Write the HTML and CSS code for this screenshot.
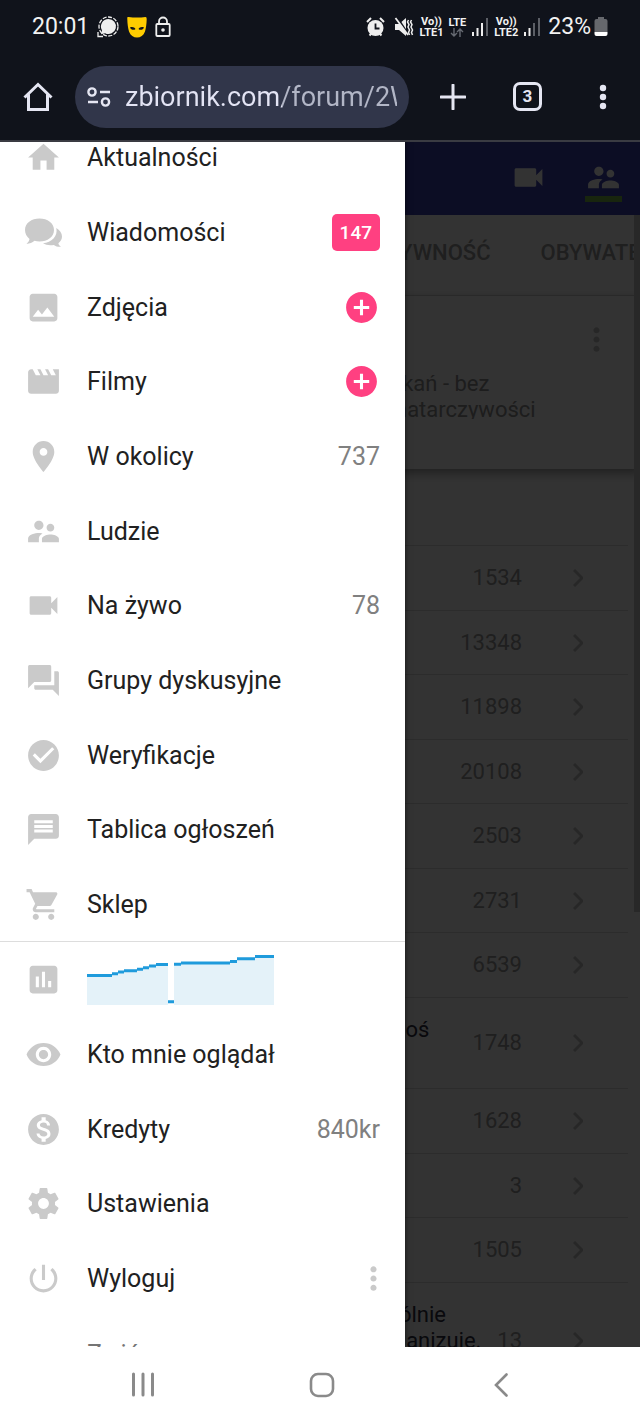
FILE: index.html
```html
<!DOCTYPE html>
<html lang="pl">
<head>
  <meta charset="UTF-8">
  <meta name="viewport" content="width=device-width, initial-scale=1.0">
  <title>zbiornik.com</title>
  <link rel="stylesheet" href="styles.css">
</head>
<body>
  <div class="status-bar">
    <div class="status-left">
      <span class="clock">20:01</span>
      <svg width="22" height="22" viewBox="0 0 22 22"><circle cx="11.500" cy="10.500" r="9.500" fill="none" stroke="#eee" stroke-width="1.300" stroke-dasharray="4 1.500"/><path d="M1 16v4.500h5" fill="none" stroke="#eee" stroke-width="1.300"/><path d="M11.500 3a7.500 7.500 0 1 1-3.400 14.200L4 18.300l1-4A7.500 7.500 0 0 1 11.500 3z" fill="#eee"/></svg>
      <svg width="20" height="22" viewBox="0 0 20 22"><path d="M1.500 1Q10 2 18.500 1q1.300 0 1.200 2c-.1 5-.7 9-1.700 12.500C16.500 19.500 13.500 21.500 10 21.500s-6.500-2-8-6C1 12 .4 8 .3 3 .2 1 .4 1 1.500 1z" fill="#fc0"/><path d="M3 11.500c2-1 4.800-.3 5.500 1.500-1.500 1.500-4.700 1-5.500-1.500zM17 11.500c-2-1-4.800-.3-5.500 1.500 1.500 1.500 4.700 1 5.500-1.500z" fill="#10131b"/></svg>
      <svg width="16" height="22" viewBox="0 0 16 22"><rect x="1.300" y="8" width="13.400" height="12" rx="1" fill="none" stroke="#eee" stroke-width="1.800"/><path d="M4 8V5.500a4 4 0 0 1 8 0V8" fill="none" stroke="#eee" stroke-width="1.800"/><circle cx="8" cy="14" r="1.800" fill="#eee"/></svg>
    </div>
    <div class="status-right">
      <svg class="alarm" width="19" height="20" viewBox="0 0 19 20"><circle cx="9.500" cy="11" r="8" fill="#eee"/><path d="M1 5l4-4M18 5l-4-4M3.500 18.500l2-2M15.500 18.500l-2-2" stroke="#eee" stroke-width="2"/><path d="M9.500 6.500v5h4" fill="none" stroke="#10131b" stroke-width="1.800"/></svg>
      <svg width="20" height="20" viewBox="0 0 20 20"><path d="M1 7h4l7-6v18l-7-6H1z" fill="#eee"/><path d="M3 0l11 17" stroke="#10131b" stroke-width="2"/><path d="M1.500 1L14 18" stroke="#eee" stroke-width="1.800"/><path d="M14.500 3l-1 2 1.500 2.500-1 2.500 1.500 3-1 2.500 1 2.500M17.500 3l-1 2 1.500 2.500-1 2.500 1.500 3-1 2.500 1 2.500" fill="none" stroke="#eee" stroke-width="1.500"/></svg>
      <span class="network">Vo))<br>LTE1</span>
      <span class="network">LTE
        <svg width="14" height="9" viewBox="0 0 14 9"><path d="M4 0v8M1 5l3 3 3-3M10 9V1M7 4l3-3 3 3" fill="none" stroke="#666a72" stroke-width="1.400"/></svg>
      </span>
      <svg width="18" height="18" viewBox="0 0 18 18"><path d="M2 14v4M6.500 10v8M11 5v13" stroke="#eee" stroke-width="2"/><path d="M16 0v18" stroke="#5c5f66" stroke-width="2"/></svg>
      <span class="network">Vo))<br>LTE2</span>
      <svg width="18" height="18" viewBox="0 0 18 18"><path d="M2 14v4M6.500 10v8" stroke="#eee" stroke-width="2"/><path d="M11 5v13M16 0v18" stroke="#5c5f66" stroke-width="2"/></svg>
      <span class="battery-text">23%</span>
      <svg width="14" height="20" viewBox="0 0 14 20"><path d="M4 0h6v2h1.500Q13.500 2 13.500 4v11H.5V4Q.5 2 2.500 2H4z" fill="#66686d"/><path d="M.5 15h13v2q0 2-2 2h-9q-2 0-2-2z" fill="#fff"/></svg>
    </div>
  </div>

  <div class="browser-bar">
    <button class="bar-btn" aria-label="Strona główna"><svg width="30" height="30" viewBox="0 0 30 30"><path d="M1.500 15.500L15 2.500l13.500 13M5.500 12.500v15h19v-15" fill="none" stroke="#e5e6f2" stroke-width="3"/></svg></button>
    <div class="address">
      <svg width="24" height="20" viewBox="0 0 24 20"><path d="M13 5h10M1 15h10" stroke="#e5e6f2" stroke-width="2.400"/><circle cx="5" cy="5" r="3.600" fill="none" stroke="#e5e6f2" stroke-width="2.400"/><circle cx="18.500" cy="15" r="3.600" fill="none" stroke="#e5e6f2" stroke-width="2.400"/></svg>
      <input type="text" value="zbiornik.com/forum/2W" aria-label="Adres strony">
    </div>
    <button class="bar-btn" aria-label="Nowa karta"><svg width="26" height="26" viewBox="0 0 26 26"><path d="M13 1v24M1 13h24" stroke="#e5e6f2" stroke-width="3" stroke-linecap="round"/></svg></button>
    <button class="bar-btn" aria-label="Karty"><span class="tabs-count">3</span></button>
    <button class="bar-btn" aria-label="Menu"><svg width="8" height="28" viewBox="0 0 8 28"><g fill="#e5e6f2"><circle cx="4" cy="5" r="3.200"/><circle cx="4" cy="14" r="3.200"/><circle cx="4" cy="23" r="3.200"/></g></svg></button>
  </div>

  <div class="viewport">
    <div class="page">
      <div class="app-header">
        <a href="#" class="header-link" aria-label="Na żywo"><svg class="icon" viewBox="0 0 24 24"><path d="M17 10.500V7c0-.55-.45-1-1-1H4c-.55 0-1 .45-1 1v10c0 .55.45 1 1 1h12c.55 0 1-.45 1-1v-3.500l4 4v-11l-4 4z"/></svg></a>
        <a href="#" class="header-link active" aria-label="Ludzie"><svg class="icon" viewBox="0 0 24 24"><path d="M16.500 12c1.380 0 2.490-1.120 2.490-2.500S17.880 7 16.500 7C15.120 7 14 8.120 14 9.500s1.120 2.500 2.500 2.500zM9 11c1.660 0 2.990-1.340 2.990-3S10.660 5 9 5C7.340 5 6 6.340 6 8s1.340 3 3 3zm7.500 3c-1.830 0-5.500.92-5.500 2.750V19h11v-2.250c0-1.830-3.670-2.750-5.500-2.750zM9 13c-2.330 0-7 1.170-7 3.500V19h7v-2.250c0-.85.33-2.340 2.370-3.470C10.500 13.100 9.660 13 9 13z"/></svg></a>
      </div>
      <div class="tabs">
        <a href="#">AKTYWNOŚĆ</a>
        <a href="#">OBYWATELE</a>
      </div>
      <div class="card">
        <button class="more" aria-label="Więcej"><svg class="icon" viewBox="0 0 24 24"><path d="M12 8c1.100 0 2-.9 2-2s-.9-2-2-2-2 .9-2 2 .9 2 2 2zm0 2c-1.100 0-2 .9-2 2s.9 2 2 2 2-.9 2-2-.9-2-2-2zm0 6c-1.100 0-2 .9-2 2s.9 2 2 2 2-.9 2-2-.9-2-2-2z"/></svg></button>
        <p>tkań - bez<br>natarczywości</p>
      </div>
      <table class="forum">
        <tbody>
          <tr><td class="name"></td><td class="count">1534</td><td class="go"><svg width="10" height="18" viewBox="0 0 10 18"><path d="M1 1l8 8-8 8"/></svg></td></tr>
          <tr><td class="name"></td><td class="count">13348</td><td class="go"><svg width="10" height="18" viewBox="0 0 10 18"><path d="M1 1l8 8-8 8"/></svg></td></tr>
          <tr><td class="name"></td><td class="count">11898</td><td class="go"><svg width="10" height="18" viewBox="0 0 10 18"><path d="M1 1l8 8-8 8"/></svg></td></tr>
          <tr><td class="name"></td><td class="count">20108</td><td class="go"><svg width="10" height="18" viewBox="0 0 10 18"><path d="M1 1l8 8-8 8"/></svg></td></tr>
          <tr><td class="name"></td><td class="count">2503</td><td class="go"><svg width="10" height="18" viewBox="0 0 10 18"><path d="M1 1l8 8-8 8"/></svg></td></tr>
          <tr><td class="name"></td><td class="count">2731</td><td class="go"><svg width="10" height="18" viewBox="0 0 10 18"><path d="M1 1l8 8-8 8"/></svg></td></tr>
          <tr><td class="name"></td><td class="count">6539</td><td class="go"><svg width="10" height="18" viewBox="0 0 10 18"><path d="M1 1l8 8-8 8"/></svg></td></tr>
          <tr><td class="name">radoś<br>&nbsp;</td><td class="count">1748</td><td class="go"><svg width="10" height="18" viewBox="0 0 10 18"><path d="M1 1l8 8-8 8"/></svg></td></tr>
          <tr><td class="name"></td><td class="count">1628</td><td class="go"><svg width="10" height="18" viewBox="0 0 10 18"><path d="M1 1l8 8-8 8"/></svg></td></tr>
          <tr><td class="name"></td><td class="count">3</td><td class="go"><svg width="10" height="18" viewBox="0 0 10 18"><path d="M1 1l8 8-8 8"/></svg></td></tr>
          <tr><td class="name"></td><td class="count">1505</td><td class="go"><svg width="10" height="18" viewBox="0 0 10 18"><path d="M1 1l8 8-8 8"/></svg></td></tr>
          <tr><td class="name">ogólnie<br>organizuje.<br>&nbsp;</td><td class="count">13</td><td class="go"><svg width="10" height="18" viewBox="0 0 10 18"><path d="M1 1l8 8-8 8"/></svg></td></tr>
        </tbody>
      </table>
      <div class="scroll-thumb"></div>
    </div>
    <div class="backdrop"></div>

    <nav class="drawer">
      <ul class="menu">
        <li><a href="#"><svg class="icon" viewBox="0 0 24 24"><path d="M10 20v-6h4v6h5v-8h3L12 3 2 12h3v8z"/></svg><span>Aktualności</span></a></li>
        <li><a href="#"><svg class="icon" viewBox="0 0 37 37"><path d="M14.500 4.500C22.500 4.500 29 9.200 29 16S22.500 27.500 14.500 27.500c-1.700 0-3.400-.2-5-.7-2.200 1.800-4.800 2.900-8 3.100 1.600-1.500 2.600-3 3-5C1.700 22.700 0 19.500 0 16 0 9.200 6.500 4.500 14.500 4.500z"/><path d="M31.300 14c3.500 2 5.700 5 5.700 8.500 0 2.800-1.400 5-3.600 6.700.3 1.700 1.200 2.600 2.600 3.600-3 .2-5.300-.5-7.200-1.900-4 .9-7.800.2-10.800-1.600C26.500 28.700 33.200 22 31.300 14z"/></svg><span>Wiadomości</span><span class="badge">147</span></a></li>
        <li><a href="#"><svg class="icon" viewBox="0 0 24 24"><path d="M21 19V5c0-1.100-.9-2-2-2H5c-1.100 0-2 .9-2 2v14c0 1.100.9 2 2 2h14c1.100 0 2-.9 2-2zM8.500 13.500l2.500 3.010L14.500 12l4.500 6H5l3.500-4.500z"/></svg><span>Zdjęcia</span></a><button class="add" aria-label="Dodaj zdjęcie"><svg class="icon" viewBox="0 0 24 24"><path d="M12 2C6.480 2 2 6.480 2 12s4.480 10 10 10 10-4.480 10-10S17.520 2 12 2zm5 11h-4v4h-2v-4H7v-2h4V7h2v4h4v2z"/></svg></button></li>
        <li><a href="#"><svg class="icon" viewBox="0 0 24 24"><path d="M18 4l2 4h-3l-2-4h-2l2 4h-3l-2-4H8l2 4H7L5 4H4c-1.100 0-1.990.9-1.990 2L2 18c0 1.100.9 2 2 2h16c1.100 0 2-.9 2-2V4h-4z"/></svg><span>Filmy</span></a><button class="add" aria-label="Dodaj film"><svg class="icon" viewBox="0 0 24 24"><path d="M12 2C6.480 2 2 6.480 2 12s4.480 10 10 10 10-4.480 10-10S17.520 2 12 2zm5 11h-4v4h-2v-4H7v-2h4V7h2v4h4v2z"/></svg></button></li>
        <li><a href="#"><svg class="icon" viewBox="0 0 24 24"><path d="M12 2C8.130 2 5 5.130 5 9c0 5.250 7 13 7 13s7-7.750 7-13c0-3.870-3.130-7-7-7zm0 9.500c-1.380 0-2.500-1.120-2.500-2.500s1.120-2.500 2.500-2.500 2.500 1.120 2.500 2.500-1.120 2.500-2.500 2.500z"/></svg><span>W okolicy</span><span class="number">737</span></a></li>
        <li><a href="#"><svg class="icon" viewBox="0 0 24 24"><path d="M16.500 12c1.380 0 2.490-1.120 2.490-2.500S17.880 7 16.500 7C15.120 7 14 8.120 14 9.500s1.120 2.500 2.500 2.500zM9 11c1.660 0 2.990-1.340 2.990-3S10.660 5 9 5C7.340 5 6 6.340 6 8s1.340 3 3 3zm7.500 3c-1.830 0-5.500.92-5.500 2.750V19h11v-2.250c0-1.830-3.670-2.750-5.500-2.750zM9 13c-2.330 0-7 1.170-7 3.500V19h7v-2.250c0-.85.33-2.340 2.370-3.470C10.500 13.100 9.660 13 9 13z"/></svg><span>Ludzie</span></a></li>
        <li><a href="#"><svg class="icon" viewBox="0 0 24 24"><path d="M17 10.500V7c0-.55-.45-1-1-1H4c-.55 0-1 .45-1 1v10c0 .55.45 1 1 1h12c.55 0 1-.45 1-1v-3.500l4 4v-11l-4 4z"/></svg><span>Na żywo</span><span class="number">78</span></a></li>
        <li><a href="#"><svg class="icon" viewBox="0 0 24 24"><path d="M21 6h-2v9H6v2c0 .55.45 1 1 1h11l4 4V7c0-.55-.45-1-1-1zm-4 6V3c0-.55-.45-1-1-1H3c-.55 0-1 .45-1 1v14l4-4h10c.55 0 1-.45 1-1z"/></svg><span>Grupy dyskusyjne</span></a></li>
        <li><a href="#"><svg class="icon" viewBox="0 0 24 24"><path d="M12 2C6.480 2 2 6.480 2 12s4.480 10 10 10 10-4.480 10-10S17.520 2 12 2zm-2 15l-5-5 1.410-1.410L10 14.170l7.590-7.590L19 8l-9 9z"/></svg><span>Weryfikacje</span></a></li>
        <li><a href="#"><svg class="icon" viewBox="0 0 24 24"><path d="M20 2H4c-1.100 0-1.990.9-1.990 2L2 22l4-4h14c1.100 0 2-.9 2-2V4c0-1.100-.9-2-2-2zm-2 12H6v-2h12v2zm0-3H6V9h12v2zm0-3H6V6h12v2z"/></svg><span>Tablica ogłoszeń</span></a></li>
        <li><a href="#"><svg class="icon" viewBox="0 0 24 24"><path d="M7 18c-1.100 0-1.990.9-1.990 2S5.900 22 7 22s2-.9 2-2-.9-2-2-2zM1 2v2h2l3.600 7.590-1.350 2.450c-.16.28-.25.61-.25.960 0 1.100.9 2 2 2h12v-2H7.420c-.14 0-.25-.11-.25-.25l.03-.12.900-1.630h7.450c.75 0 1.410-.41 1.750-1.030l3.580-6.490c.08-.14.12-.31.12-.48 0-.55-.45-1-1-1H5.210l-.94-2H1zm16 16c-1.100 0-1.990.9-1.990 2s.89 2 1.990 2 2-.9 2-2-.9-2-2-2z"/></svg><span>Sklep</span></a></li>
      </ul>
      <ul class="menu account">
        <li><a href="#" aria-label="Statystyki"><svg class="icon" viewBox="0 0 24 24"><path d="M19 3H5c-1.100 0-2 .9-2 2v14c0 1.100.9 2 2 2h14c1.100 0 2-.9 2-2V5c0-1.100-.9-2-2-2zM9 17H7v-7h2v7zm4 0h-2V7h2v10zm4 0h-2v-4h2v4z"/></svg>
          <svg width="187" height="50" viewBox="0 0 187 50"><path d="M0 50V20h25v-2h6v-1h6v-1h13v-2h6v-1h6v-2h7V9h12v41zM87 50V9h7V8h49V6h7V4h18V1h19v49z" fill="#e4f2f9"/><path d="M0 20.500h25M25 18.700h6M31 17h6M37 15.700h13M50 14.300h6M56 12.700h6M62 11h7M69 9.500h12M81 46.700h6M87 9.200h7M94 8h49M143 6.500h7M150 3.700h18M168 1.500h19" stroke="#1f9bdc" stroke-width="3"/></svg></a></li>
        <li><a href="#"><svg class="icon" viewBox="0 0 24 24"><path d="M12 4.500C7 4.500 2.730 7.610 1 12c1.730 4.390 6 7.500 11 7.500s9.270-3.110 11-7.500c-1.730-4.390-6-7.500-11-7.500zM12 17c-2.760 0-5-2.240-5-5s2.240-5 5-5 5 2.240 5 5-2.240 5-5 5zm0-8c-1.660 0-3 1.340-3 3s1.340 3 3 3 3-1.340 3-3-1.340-3-3-3z"/></svg><span>Kto mnie oglądał</span></a></li>
        <li><a href="#"><svg class="icon" viewBox="0 0 24 24"><path d="M12 2C6.480 2 2 6.480 2 12s4.480 10 10 10 10-4.480 10-10S17.520 2 12 2zm1.410 16.090V20h-2.670v-1.930c-1.710-.36-3.160-1.460-3.270-3.400h1.960c.1 1.050.82 1.870 2.650 1.870 1.960 0 2.400-.98 2.400-1.590 0-.83-.44-1.610-2.670-2.140-2.480-.6-4.180-1.620-4.180-3.670 0-1.720 1.390-2.840 3.110-3.210V4h2.670v1.950c1.860.45 2.790 1.860 2.850 3.390H14.300c-.05-1.110-.64-1.870-2.220-1.870-1.500 0-2.400.68-2.400 1.640 0 .84.650 1.390 2.670 1.910s4.180 1.390 4.180 3.910c-.01 1.830-1.380 2.830-3.120 3.160z"/></svg><span>Kredyty</span><span class="number">840kr</span></a></li>
        <li><a href="#"><svg class="icon" viewBox="0 0 24 24"><path d="M19.430 12.980c.04-.32.07-.64.07-.98s-.03-.66-.07-.98l2.110-1.650c.19-.15.24-.42.12-.64l-2-3.460c-.12-.22-.39-.3-.61-.22l-2.490 1c-.52-.4-1.080-.73-1.690-.98l-.38-2.650C14.460 2.180 14.250 2 14 2h-4c-.25 0-.46.18-.49.42l-.38 2.650c-.61.25-1.170.59-1.690.98l-2.490-1c-.23-.09-.49 0-.61.22l-2 3.460c-.13.22-.07.49.12.64l2.110 1.650c-.04.32-.07.65-.07.98s.03.66.07.98l-2.110 1.650c-.19.15-.24.42-.12.64l2 3.460c.12.22.39.3.61.22l2.490-1c.52.4 1.080.73 1.690.98l.38 2.650c.03.24.24.42.49.42h4c.25 0 .46-.18.49-.42l.38-2.650c.61-.25 1.170-.59 1.690-.98l2.490 1c.23.09.49 0 .61-.22l2-3.460c.12-.22.07-.49-.12-.64l-2.110-1.650zM12 15.500c-1.930 0-3.500-1.570-3.500-3.500s1.570-3.500 3.500-3.500 3.500 1.570 3.500 3.500-1.570 3.500-3.500 3.500z"/></svg><span>Ustawienia</span></a></li>
        <li><a href="#"><svg class="icon" viewBox="0 0 24 24"><path d="M13 3h-2v10h2V3zm4.830 2.170l-1.420 1.420C17.990 7.860 19 9.810 19 12c0 3.870-3.130 7-7 7s-7-3.130-7-7c0-2.190 1.010-4.140 2.580-5.420L6.170 5.170C4.230 6.820 3 9.260 3 12c0 4.970 4.030 9 9 9s9-4.030 9-9c0-2.740-1.230-5.180-3.170-6.830z"/></svg><span>Wyloguj</span></a><button class="more" aria-label="Więcej"><svg class="icon" viewBox="0 0 24 24"><path d="M12 8c1.100 0 2-.9 2-2s-.9-2-2-2-2 .9-2 2 .9 2 2 2zm0 2c-1.100 0-2 .9-2 2s.9 2 2 2 2-.9 2-2-.9-2-2-2zm0 6c-1.100 0-2 .9-2 2s.9 2 2 2 2-.9 2-2-.9-2-2-2z"/></svg></button></li>
      </ul>
      <a href="#" class="collapse">Zwiń</a>
    </nav>
  </div>

  <div class="nav-bar">
    <button aria-label="Ostatnie"><svg width="24" height="26" viewBox="0 0 24 26"><path d="M2.500 2v21M12 2v21M21.500 2v21" stroke="#8a8a8a" stroke-width="3" stroke-linecap="round"/></svg></button>
    <button aria-label="Ekran główny"><svg width="26" height="26" viewBox="0 0 26 26"><rect x="2" y="2" width="22" height="22" rx="7" fill="none" stroke="#8a8a8a" stroke-width="2.600"/></svg></button>
    <button aria-label="Wstecz"><svg width="14" height="24" viewBox="0 0 14 24"><path d="M12.500 1.500L2 12l10.500 10.500" fill="none" stroke="#8a8a8a" stroke-width="2.600" stroke-linecap="round"/></svg></button>
  </div>
</body>
</html>
```
FILE: styles.css
```css
* {
  margin: 0;
  padding: 0;
  box-sizing: border-box;
}

body {
  font-family: Roboto, "Liberation Sans", sans-serif;
  background-color: #fff;
  color: #212121;
  display: flex;
  flex-direction: column;
  height: 100vh;
  overflow: hidden;
}

a {
  color: inherit;
  text-decoration: none;
}

button {
  font-family: inherit;
  background: none;
  border: none;
  cursor: pointer;
}

svg {
  display: block;
  flex-shrink: 0;
}

.icon {
  width: 37px;
  height: 37px;
  fill: #cacaca;
}

/* phone status bar */
.status-bar {
  height: 53px;
  padding: 0 32px;
  background-color: #10131b;
  color: #f2f2f2;
  display: flex;
  align-items: center;
  justify-content: space-between;
}

.status-left {
  display: flex;
  align-items: center;
  gap: 8px;
}

.clock {
  font-size: 23px;
}

.battery-text {
  margin: 0 -2px 0 2px;
  font-size: 23px;
}

.status-right {
  display: flex;
  align-items: center;
  gap: 5px;
}

.alarm {
  margin-right: 4px;
}

.network {
  font-size: 11px;
  line-height: 11px;
  font-weight: bold;
  text-align: center;
}

.network svg {
  margin: 0 auto;
}

/* browser toolbar */
.browser-bar {
  height: 89px;
  background-color: #10131b;
  border-bottom: 2px solid #3a3b42;
  display: flex;
  align-items: center;
}

.bar-btn {
  flex-shrink: 0;
  width: 75px;
  height: 62px;
  display: flex;
  align-items: center;
  justify-content: center;
}

.address {
  flex: 1;
  min-width: 0;
  height: 62px;
  margin-right: 6px;
  padding: 0 12px;
  border-radius: 31px;
  background-color: #31364a;
  display: flex;
  align-items: center;
  gap: 14px;
}

.address input {
  flex: 1;
  min-width: 0;
  font-family: inherit;
  font-size: 27px;
  border: none;
  outline: none;
  color: transparent;
  background: linear-gradient(90deg, #e3e4f4 157px, #b2b6c6 157px);
  -webkit-background-clip: text;
  background-clip: text;
}

.tabs-count {
  width: 29px;
  height: 29px;
  border: 3px solid #e5e6f2;
  border-radius: 7px;
  color: #e5e6f2;
  font-size: 17px;
  line-height: 23px;
  font-weight: bold;
}

/* page under the drawer */
.viewport {
  flex: 1;
  position: relative;
  overflow: hidden;
}

.app-header {
  height: 73px;
  padding: 0 18px;
  background-color: #3f43b5;
  display: flex;
  align-items: center;
  justify-content: flex-end;
  gap: 38px;
}

.header-link {
  border-bottom: 6px solid transparent;
  padding-top: 4px;
}

.header-link .icon {
  fill: #fff;
}

.header-link.active {
  border-color: #78b848;
}

.tabs {
  height: 81px;
  padding: 25px 0 0 357px;
  border-bottom: 1px solid #ddd;
  display: flex;
  gap: 50px;
  font-size: 22px;
  line-height: 26px;
  font-weight: 500;
  color: #999;
}

.card {
  height: 173px;
  padding: 25px 25px 0 395px;
  background-color: #fff;
  box-shadow: 0 4px 10px rgba(0, 0, 0, 0.4);
  display: flex;
  flex-direction: column;
}

.card .more {
  align-self: flex-end;
}

.card .more .icon {
  fill: #c4c4c4;
}

.card p {
  margin-top: 13px;
  max-height: 48px;
  overflow: hidden;
  font-size: 22px;
  line-height: 26px;
  color: #8f8f8f;
}

.forum {
  width: calc(100% - 12px);
  margin-top: 76px;
  border-collapse: collapse;
  table-layout: fixed;
  font-size: 22px;
  line-height: 26px;
}

.forum tr {
  height: 65px;
}

.forum tr:nth-child(even) {
  height: 64px;
}

.forum td {
  padding: 18px 0;
  border-top: 1px solid #ddd;
}

.forum .name {
  width: 374px;
  padding: 19px 0 19px 374px;
  color: #303040;
  white-space: nowrap;
}

.forum .count {
  text-align: right;
  color: #999;
}

.forum .go {
  width: 106px;
  padding-left: 51px;
}

.forum .go path {
  fill: none;
  stroke: #c4c4c4;
  stroke-width: 3;
}

.scroll-thumb {
  position: absolute;
  top: 73px;
  right: 0;
  width: 6px;
  height: 697px;
  background-color: #c8c8c8;
}

.backdrop {
  position: absolute;
  inset: 0;
  background-color: rgba(0, 0, 0, 0.8);
}

/* drawer, scrolled a little past its top */
.drawer {
  position: absolute;
  top: -22px;
  left: 0;
  bottom: 0;
  width: 405px;
  background-color: #fff;
  box-shadow: 0 0 6px rgba(0, 0, 0, 0.6);
  font-size: 25px;
}

.menu {
  list-style: none;
}

.menu li {
  height: 75px;
  padding: 0 25px;
  display: flex;
  align-items: center;
}

.menu li:nth-child(3n) {
  height: 74px;
}

.menu a {
  flex: 1;
  display: flex;
  align-items: center;
  gap: 25px;
}

.account {
  margin-top: -1px;
  border-top: 1px solid #ddd;
}

.number {
  margin-left: auto;
  color: #808080;
}

.badge {
  height: 37px;
  padding: 0 8px;
  margin-left: auto;
  border-radius: 5px;
  background-color: #ff4081;
  color: #fff;
  font-size: 19px;
  line-height: 37px;
  font-weight: 500;
}

.add .icon {
  fill: #ff4081;
}

.drawer .more {
  margin-right: -12px;
}

.collapse {
  display: block;
  padding: 24px 25px 0 87px;
  line-height: 30px;
  color: #757575;
}

/* phone navigation */
.nav-bar {
  height: 75px;
  padding: 0 50px 0 54px;
  background-color: #fff;
  display: grid;
  grid-template-columns: repeat(3, 1fr);
}

.nav-bar button {
  display: flex;
  align-items: center;
  justify-content: center;
}
```
